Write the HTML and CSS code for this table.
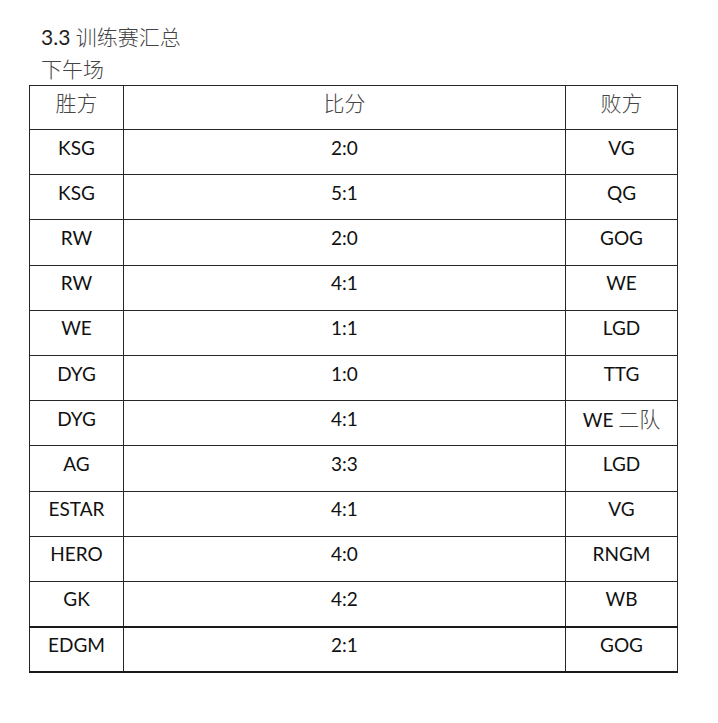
FILE: index.html
```html
<!DOCTYPE html>
<html lang="zh-CN">
<head>
<meta charset="utf-8">
<title>3.3 训练赛汇总</title>
<link rel="stylesheet" href="styles.css">
</head>
<body>
<div class="page">
  <div class="heading">
    <div class="line"><span class="lat">3.3</span> <span class="cn">训练赛汇总</span></div>
    <div class="line"><span class="cn">下午场</span></div>
  </div>
  <table class="results">
    <colgroup>
      <col class="c-win">
      <col class="c-score">
      <col class="c-lose">
    </colgroup>
    <thead>
      <tr class="head-row"><th><span class="cn">胜方</span></th><th><span class="cn">比分</span></th><th><span class="cn">败方</span></th></tr>
    </thead>
    <tbody>
      <tr><td>KSG</td><td>2:0</td><td>VG</td></tr>
      <tr><td>KSG</td><td>5:1</td><td>QG</td></tr>
      <tr><td>RW</td><td>2:0</td><td>GOG</td></tr>
      <tr><td>RW</td><td>4:1</td><td>WE</td></tr>
      <tr><td>WE</td><td>1:1</td><td>LGD</td></tr>
      <tr><td>DYG</td><td>1:0</td><td>TTG</td></tr>
      <tr><td>DYG</td><td>4:1</td><td>WE <span class="cn">二队</span></td></tr>
      <tr><td>AG</td><td>3:3</td><td>LGD</td></tr>
      <tr><td>ESTAR</td><td>4:1</td><td>VG</td></tr>
      <tr><td>HERO</td><td>4:0</td><td>RNGM</td></tr>
      <tr class="pre-last"><td>GK</td><td>4:2</td><td>WB</td></tr>
      <tr class="last"><td>EDGM</td><td>2:1</td><td>GOG</td></tr>
    </tbody>
  </table>
</div>
</body>
</html>
```

FILE: styles.css
```css
html, body {
  margin: 0;
  padding: 0;
  background: #ffffff;
}

.page {
  padding: 20px 0 0 29px;
  font-family: "Lato", "Noto Sans", "Noto Sans CJK SC", sans-serif;
  color: #111111;
}

.heading {
  padding-left: 12px;
  margin-bottom: 1px;
}

.heading .line {
  height: 32px;
  line-height: 32px;
  font-size: 21px;
  white-space: nowrap;
}

.lat {
  color: #1e1e1e;
}

.cn {
  font-family: "Noto Sans CJK SC", sans-serif;
  font-weight: 300;
  font-size: 21px;
  color: #444444;
}

.results {
  border-collapse: collapse;
  table-layout: fixed;
  width: 648px;
  border: 1.5px solid #1a1a1a;
}

.c-win { width: 94px; }
.c-score { width: 442px; }
.c-lose { width: 112px; }

.results th,
.results td {
  border: 1px solid #262626;
  text-align: center;
  vertical-align: middle;
  padding: 0 0 9px 0;
  font-size: 19px;
  font-weight: 400;
  line-height: 24px;
  white-space: nowrap;
}

.results .head-row th {
  height: 44px;
  box-sizing: border-box;
  padding-bottom: 10px;
}

.results tbody tr {
  height: 45.2px;
}

.results tr.pre-last td {
  border-bottom: 2px solid #1a1a1a;
}

.results tr.last td {
  border-bottom: 2px solid #1a1a1a;
}
```
